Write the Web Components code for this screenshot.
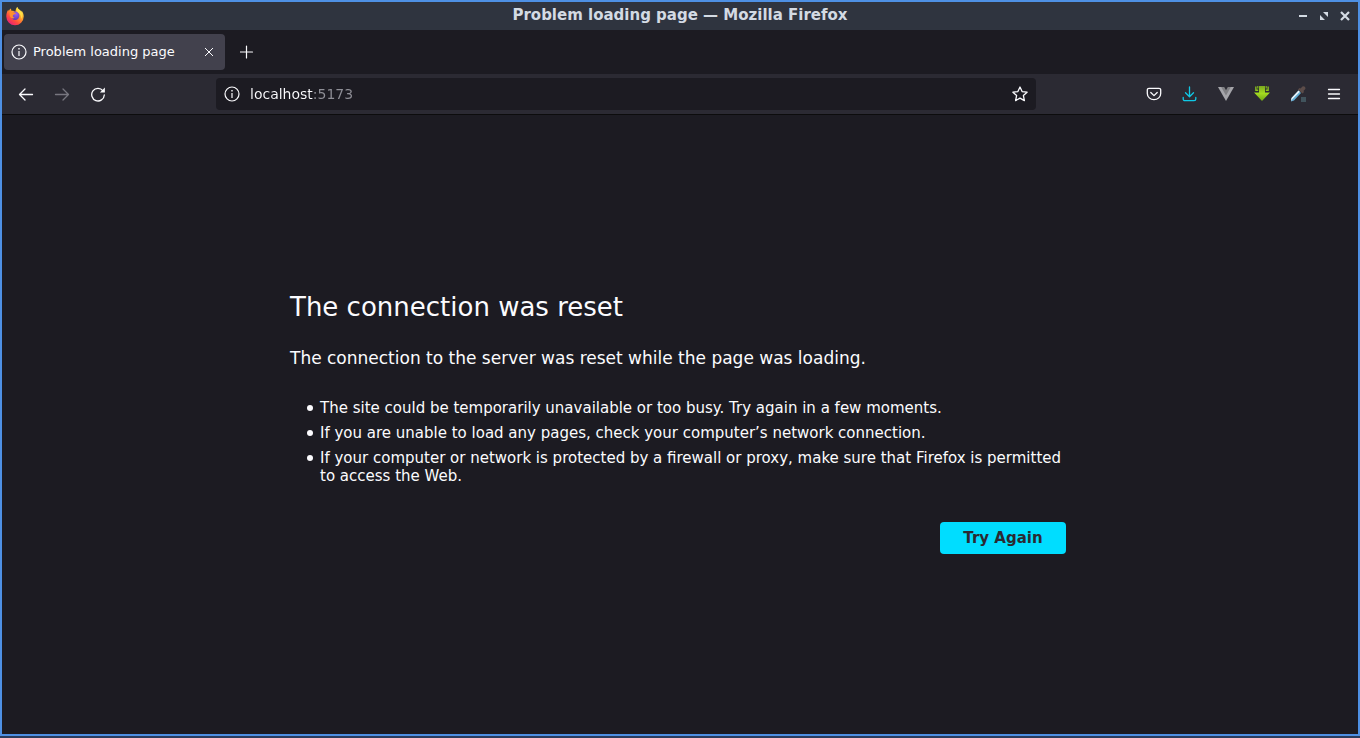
<!DOCTYPE html>
<html lang="en">
<head>
<meta charset="utf-8">
<title>Problem loading page</title>
<style>
  html, body { height: 100%; margin: 0; }
  body { background: #2a3c5c; color: #fbfbfe; font: 15px/18px "DejaVu Sans", sans-serif; }
</style>
</head>
<body>
<browser-window>
  <title-bar slot="title">Problem loading page — Mozilla Firefox</title-bar>
  <tab-strip slot="tabs"><browser-tab>Problem loading page</browser-tab></tab-strip>
  <nav-toolbar slot="toolbar"></nav-toolbar>
  <error-page>
    <span slot="heading">The connection was reset</span>
    <span slot="summary">The connection to the server was reset while the page was loading.</span>
    <error-hint role="listitem">The site could be temporarily unavailable or too busy. Try again in a few moments.</error-hint>
    <error-hint role="listitem">If you are unable to load any pages, check your computer’s network connection.</error-hint>
    <error-hint role="listitem">If your computer or network is protected by a firewall or proxy, make sure that Firefox is permitted to access the Web.</error-hint>
    <span slot="action">Try Again</span>
  </error-page>
</browser-window>

<script>
const define = (name, html) => customElements.define(name, class extends HTMLElement {
  constructor() {
    super();
    this.attachShadow({ mode: 'open' }).innerHTML = html;
  }
});

define('browser-window', `
  <style>
    :host { display: flex; flex-direction: column; box-sizing: border-box; min-height: calc(100vh - 2px);
      border: 2px solid #4e90e4; background: #1c1b22; }
    main { flex: 1; display: flex; }
  </style>
  <slot name="title"></slot><slot name="tabs"></slot><slot name="toolbar"></slot>
  <main><slot></slot></main>`);

define('title-bar', `
  <style>
    :host { display: grid; grid-template-columns: 1fr auto 1fr; align-items: center; height: 28px;
      padding: 0 3px; background: #2f343f; color: #d3dae3; font-size: 15px; font-weight: bold; }
    svg { display: block; }
    .controls { display: flex; justify-content: flex-end; }
    button { width: 21px; height: 24px; padding: 0; border: 0; background: none; color: inherit;
      display: grid; place-items: center; }
    h2 { margin: 0; font: inherit; line-height: 26px; height: 28px; }
  </style>
  <svg width="20" height="20" viewBox="0 0 20 20" aria-hidden="true">
    <defs>
      <linearGradient id="fire" x1=".85" y1=".1" x2=".2" y2=".95">
        <stop offset="0" stop-color="#ffe94a"/><stop offset=".4" stop-color="#ff9a2a"/>
        <stop offset=".7" stop-color="#ff4a3e"/><stop offset="1" stop-color="#e4207c"/>
      </linearGradient>
      <radialGradient id="globe" cx=".6" cy=".3" r=".8">
        <stop offset="0" stop-color="#9a5cf5"/><stop offset="1" stop-color="#5536a8"/>
      </radialGradient>
    </defs>
    <path fill="url(#fire)" d="M12.200 1c.7 2.200 2.900 2.800 4.200 4.800.2-.4.2-.9.1-1.400 1.600 1.800 2.200 4 2.200 6.100A8.700 8.700 0 0 1 1.300 10.500C1.300 8 2 5.400 3.300 3.800l.6 1.500c.4-1.300 1-2.100 2-2.700l.5 2.200c2-.2 3.200.5 4 1.300.2-2 .6-3.700 1.800-5.100z"/>
    <circle cx="10.200" cy="9.800" r="4.200" fill="url(#globe)"/>
    <path fill="#ff8f2e" d="M5 6.200c1.700-.9 3-.6 4.200.3l1.800.5c-.5 1.100-1.400 1.300-2.200 1.500-.9.500-1.200 1.300-.9 2.100.3.700 1 1 1.800.9-1 1-2.200 1.200-3.200.6-1.700-1-2.300-3.300-1.500-5.900z"/>
    <path fill="#ffdf45" d="M12.200 1c.7 2.200 2.900 2.800 4.200 4.800 1.400 2.400 1.200 5-.2 7.200.2-2.600-.6-4.600-2.200-5.800-1.700-1.200-3-3.200-1.800-6.200z"/>
  </svg>
  <h2><slot></slot></h2>
  <div class="controls">
    <button aria-label="Minimize"><svg width="12" height="12"><path fill="currentColor" d="M2 5h8v2H2z"/></svg></button>
    <button aria-label="Restore"><svg width="12" height="12"><path fill="currentColor" d="M5 2h5v5zM2 5v5h5z"/></svg></button>
    <button aria-label="Close"><svg width="12" height="12"><path stroke="currentColor" stroke-width="2.200" d="m2 2 8 8M10 2l-8 8"/></svg></button>
  </div>`);

define('tab-strip', `
  <style>
    :host { display: flex; align-items: center; gap: 4px; height: 44px; padding: 0 2px; background: #1c1b22; }
    button { width: 36px; height: 36px; padding: 0; border: 0; background: none; color: #fbfbfe;
      display: grid; place-items: center; }
  </style>
  <slot></slot>
  <button aria-label="Open a new tab"><svg width="14" height="14"><path stroke="currentColor" stroke-width="1.200" stroke-linecap="round" d="M6.500 1v12M.500 7h12"/></svg></button>`);

define('browser-tab', `
  <style>
    :host { display: flex; align-items: center; gap: 6px; box-sizing: border-box; width: 221px; height: 36px;
      padding: 0 4px 0 7px; border-radius: 4px; background: #42414d; color: #fbfbfe; font-size: 13px; }
    span { flex: 1; white-space: nowrap; }
    button { width: 24px; height: 24px; padding: 0; border: 0; background: none; color: inherit;
      display: grid; place-items: center; }
  </style>
  <svg width="16" height="16" viewBox="0 0 16 16" aria-hidden="true"><circle cx="8" cy="8" r="7" fill="none" stroke="currentColor" stroke-width="1.200"/><path fill="currentColor" d="M7.400 7h1.200v5H7.400zM7.300 4h1.400v1.400H7.300z"/></svg>
  <span><slot></slot></span>
  <button aria-label="Close tab"><svg width="10" height="10"><path stroke="currentColor" d="m1 1 8 8M9 1 1 9"/></svg></button>`);

define('nav-toolbar', `
  <style>
    :host { display: flex; align-items: center; height: 40px; padding: 0 6px; background: #2b2a33;
      border-bottom: 1px solid #0c0c0d; color: #fbfbfe; }
    .spring { flex: 100 1 0; }
    url-bar { flex: 804 1 0; }
    .group { display: flex; }
    button { width: 36px; height: 36px; padding: 0; border: 0; background: none; color: inherit;
      display: grid; place-items: center; }
    button:disabled { color: #77767f; }
    .cyan { color: #0fc9e6; }
    svg { fill: none; stroke: currentColor; stroke-width: 1.300; stroke-linecap: round; stroke-linejoin: round; }
  </style>
  <div class="group">
    <button aria-label="Back"><svg width="16" height="16"><path d="M14.500 8.500h-13M7 3 1.500 8.500 7 14"/></svg></button>
    <button aria-label="Forward" disabled><svg width="16" height="16"><path d="M1.500 8.500h13M9 3l5.500 5.500L9 14"/></svg></button>
    <button aria-label="Reload"><svg width="16" height="16"><path d="M13 4.800A6.300 6.300 0 1 0 14.300 9"/><path fill="currentColor" stroke="none" d="M14.900 1.500v5H9.900z"/></svg></button>
  </div>
  <div class="spring"></div>
  <url-bar></url-bar>
  <div class="spring"></div>
  <div class="group">
    <button aria-label="Save to Pocket"><svg width="16" height="16"><path d="M3 2.300h10a1.700 1.700 0 0 1 1.700 1.700v3.500a6.700 6.200 0 0 1-13.400 0V4A1.700 1.700 0 0 1 3 2.300z"/><path d="M4.800 6.500 8 9.600l3.200-3.100"/></svg></button>
    <button class="cyan" aria-label="Downloads"><svg width="16" height="16"><path d="M7.500 1v9.500M3.500 6.800l4 3.900 4-3.900M1.200 11.500V13A1.700 1.700 0 0 0 2.900 14.700h9.200a1.700 1.700 0 0 0 1.700-1.700v-1.500"/></svg></button>
    <button aria-label="Vue.js devtools"><svg width="16" height="16" style="stroke:none"><path fill="#a5a5aa" d="M0 1h16L8 15z"/><path fill="#808084" d="M3.200 1h9.600L8 9.500z"/><path fill="#2b2a33" d="M6.200 1h3.600L8 4.200z"/></svg></button>
    <button aria-label="Video downloader"><svg width="16" height="16" style="stroke:none"><defs><linearGradient id="g" x2="0" y2="1"><stop stop-color="#7ba81f"/><stop offset=".5" stop-color="#a3db20"/><stop offset="1" stop-color="#6fa414"/></linearGradient></defs><path fill="url(#g)" d="M5 0h6v6.500h5L8 15 0 6.500h5z"/><path fill="#8cc51d" d="M1.200.5h1.300v3h1.700V5h-3zM14.800.5h-1.300v3h-1.700V5h3zM3.300 0h1v2.500h-1zM11.700 0h1v2.500h-1z"/></svg></button>
    <button aria-label="ColorZilla"><svg width="16" height="16" style="stroke:none"><path fill="#41545d" d="M11 11h5v5h-5z"/><path fill="#65aed5" d="m8.500 4.500 2.500 2.500-7 7.500-3 1L1.500 12z"/><path fill="#edf5fa" d="m8.500 4.500 1.300 1.300-7.500 7.400L1 15l.500-3z"/><path fill="#5c4c49" d="m8 3.500 1.500-1.500 1 .500L12.500.500c2-.6 3.400 1 2.800 2.600L13.500 5l.500 1-1.500 1.500z"/></svg></button>
    <button aria-label="Open application menu"><svg width="16" height="16"><path d="M2.500 3.500h11M2.500 8h11M2.500 12.500h11"/></svg></button>
  </div>`);

define('url-bar', `
  <style>
    :host { display: flex; align-items: center; gap: 10px; box-sizing: border-box; height: 32px; padding: 0 8px;
      border-radius: 4px; background: #1c1b22; color: #fbfbfe; }
    svg { display: block; }
    input { flex: 1; min-width: 0; height: 24px; padding: 0; border: 0; outline: 0; font: inherit; font-size: 14px;
      color: #fbfbfe; -webkit-text-fill-color: transparent; caret-color: #fbfbfe;
      background: linear-gradient(90deg, #fbfbfe 63px, #8f8f97 63px); -webkit-background-clip: text; background-clip: text; }
    button { width: 16px; height: 24px; padding: 0; border: 0; background: none; color: inherit;
      display: grid; place-items: center; }
  </style>
  <svg width="16" height="16" viewBox="0 0 16 16" aria-hidden="true"><circle cx="8" cy="8" r="7" fill="none" stroke="currentColor" stroke-width="1.200"/><path fill="currentColor" d="M7.400 7h1.200v5H7.400zM7.300 4h1.400v1.400H7.300z"/></svg>
  <input type="text" value="localhost:5173" aria-label="Address" spellcheck="false">
  <button aria-label="Bookmark this page"><svg width="16" height="16"><path fill="none" stroke="currentColor" stroke-width="1.300" stroke-linejoin="round" d="m8 1 2.100 4.600 5 .6-3.700 3.400 1 5L8 12.100l-4.400 2.500 1-5L.9 6.200l5-.6z"/></svg></button>`);

define('error-hint', `
  <style>
    :host { display: grid; grid-template-columns: 6px 1fr; column-gap: 7px; margin-bottom: 7px; }
    :host::before { content: ""; height: 6px; margin-top: 6px; border-radius: 50%; background: currentColor; }
  </style>
  <span><slot></slot></span>`);

define('error-page', `
  <style>
    :host { flex: 1; display: grid; place-content: center; grid-template-columns: minmax(0, 780px); padding-bottom: 5px; }
    h1 { margin: 0; font-size: 26px; line-height: 32px; font-weight: normal; }
    p { margin: 24px 0 0; font-size: 17px; line-height: 22px; }
    .hints { margin: 30px 0 0; padding-left: 17px; }
    .actions { display: flex; justify-content: flex-end; margin: 30px 4px 0; }
    button { min-width: 126px; height: 32px; padding: 0 16px; border: 0; border-radius: 4px; background: #00ddff;
      color: #2b2a33; font: inherit; font-weight: bold; }
  </style>
  <h1><slot name="heading"></slot></h1>
  <p><slot name="summary"></slot></p>
  <div class="hints" role="list"><slot></slot></div>
  <div class="actions"><button><slot name="action"></slot></button></div>`);
</script>
</body>
</html>
